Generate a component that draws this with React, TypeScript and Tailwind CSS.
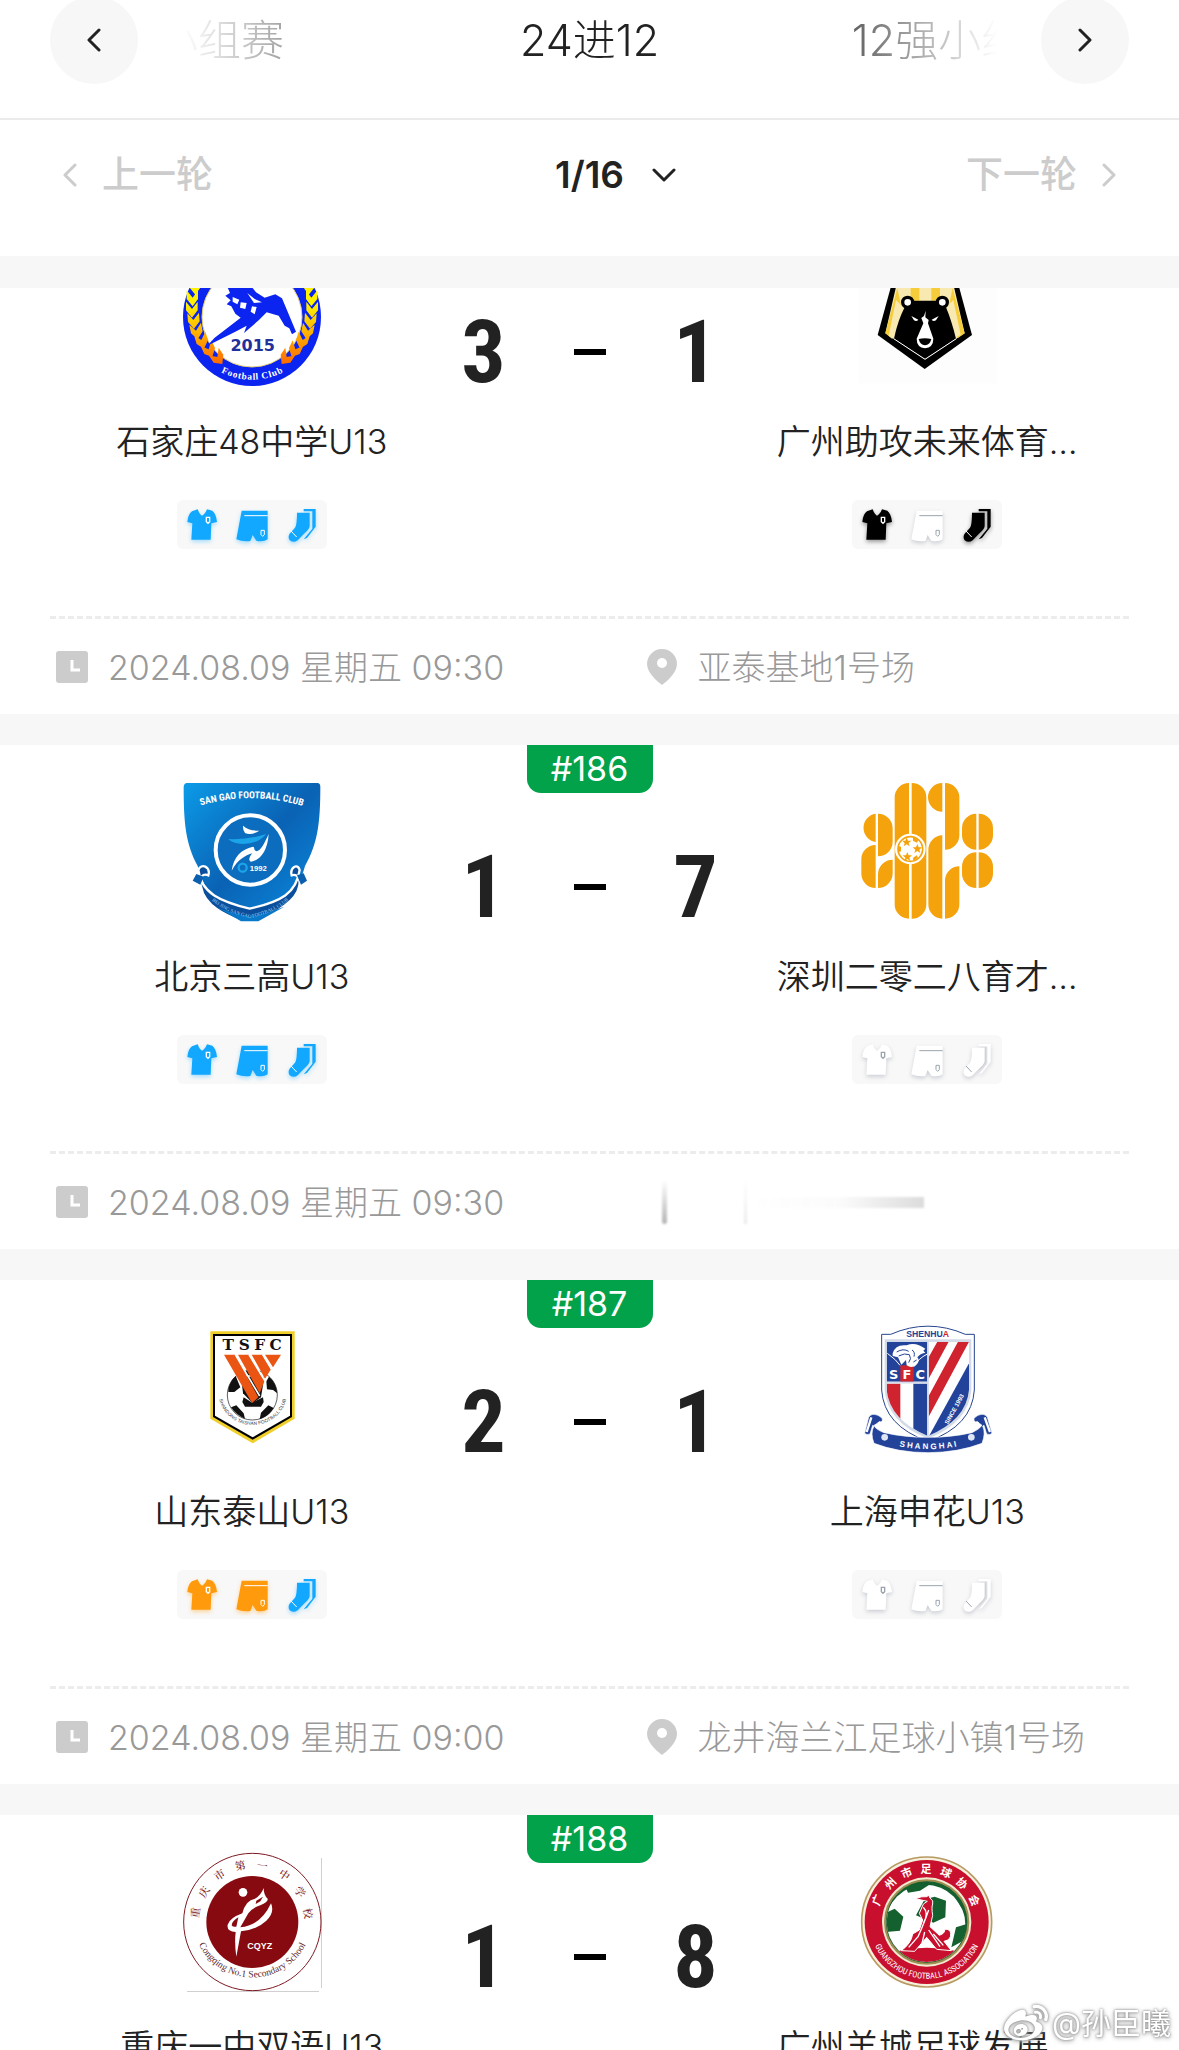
import type { ReactNode } from 'react';
import clsx from 'clsx';
import { FaWeibo } from 'react-icons/fa';

type KitColor = 'blue' | 'black' | 'white' | 'orange';

type Team = {
  name: string;
  crest: ReactNode;
  kit?: [KitColor, KitColor, KitColor];
};

type Match = {
  no?: string;
  home: Team;
  away: Team;
  score: [number, number];
  time?: string;
  place?: ReactNode;
};

const kitStyles: Record<KitColor, string> = {
  blue: 'text-[#12a8ff] drop-shadow-[0_2px_2px_rgba(18,168,255,0.35)]',
  black: 'text-black drop-shadow-[0_2px_2px_rgba(0,0,0,0.4)]',
  white: 'text-white drop-shadow-[0_2px_2px_rgba(100,110,130,0.3)]',
  orange: 'text-[#ff9a0c] drop-shadow-[0_2px_2px_rgba(255,154,12,0.4)]',
};

const lineColor = (c: KitColor) => (c === 'white' ? '#9aa3ad' : '#fff');

const Chevron = ({ d, className }: { d: string; className: string }) => (
  <svg viewBox="0 0 24 24" className={className} fill="none" stroke="currentColor">
    <path d={d} strokeLinecap="round" strokeLinejoin="round" />
  </svg>
);

const LEFT = 'M17 2L7 12l10 10';
const RIGHT = 'M7 2l10 10L7 22';
const DOWN = 'M2 7l10 10L22 7';

const Shirt = ({ color }: { color: KitColor }) => (
  <svg viewBox="340 690 150 147" className={clsx('w-[50px] h-[49px]', kitStyles[color])}>
    <path
      fill="currentColor"
      d="M385 724L402 718Q408 734 415 737Q424 733 430 718L446 722Q458 732 460 756L443 760L441 809H383L386 760L371 756Q373 732 385 724Z"
    />
    <path fill="none" stroke={lineColor(color)} strokeWidth="4" d="M428 742h10v13l-5 5l-5-5z" />
  </svg>
);

const Shorts = ({ color }: { color: KitColor }) => (
  <svg viewBox="490 690 150 147" className={clsx('w-[50px] h-[49px]', kitStyles[color])}>
    <path
      fill="currentColor"
      d="M534 722H612V808Q598 817 578 812L567 795L560 813Q538 816 518 808Z"
    />
    <path
      fill="none"
      stroke={lineColor(color)}
      strokeWidth="3"
      d="M542 737H612M592 781h10v13l-5 5l-5-5z"
    />
  </svg>
);

const Socks = ({ color }: { color: KitColor }) => (
  <svg viewBox="640 690 150 147" className={clsx('w-[50px] h-[49px]', kitStyles[color])}>
    <path fill="currentColor" d="M720 717H756V770L730 804L720 808L746 776V724H720Z" />
    <path
      fill="currentColor"
      d="M700 728H738V768Q737 778 724 788L702 811Q690 820 678 811Q671 800 679 790L694 773Q700 764 700 728Z"
    />
    <path fill="none" stroke={lineColor(color)} strokeWidth="3" d="M682 783L699 801" />
    {color === 'white' && (
      <path fill="none" stroke="#c3c8ce" strokeWidth="2" d="M740 726V770Q738 780 722 794" />
    )}
  </svg>
);

const LionCrest = () => (
  <svg viewBox="0 0 420 420" className="size-35">
    <defs>
      <path id="lion-arc" d="M95 322A172 172 0 0 0 325 322" />
      <linearGradient id="leaf" x1="0" y1="0" x2="0" y2="1">
        <stop offset="0.3" stopColor="#fff200" />
        <stop offset="1" stopColor="#ff6a00" />
      </linearGradient>
    </defs>
    <circle cx="210" cy="210" r="207" fill="#0b24f0" />
    <circle cx="210" cy="210" r="150" fill="#fff" stroke="#e3cf7a" strokeWidth="3" />
    <path
      fill="url(#leaf)"
      d="M22 95l18 22l16-22v26l-16 22l-18-22zM14 130l18 22l16-22v26l-16 22l-18-22zM12 164l18 22l17-22v26l-17 22l-18-22zM16 199l18 20l17-22l2 26l-17 22l-18-20zM22 233l20 18l15-24l5 26l-15 24l-20-18zM36 265l22 14l12-25l8 25l-12 26l-22-14zM56 297l24 10l8-27l11 23l-8 27l-24-9zM80 325l26 5l4-28l14 21l-3 28l-26-4z"
    />
    <path
      fill="url(#leaf)"
      transform="matrix(-1 0 0 1 420 0)"
      d="M22 95l18 22l16-22v26l-16 22l-18-22zM14 130l18 22l16-22v26l-16 22l-18-22zM12 164l18 22l17-22v26l-17 22l-18-22zM16 199l18 20l17-22l2 26l-17 22l-18-20zM22 233l20 18l15-24l5 26l-15 24l-20-18zM36 265l22 14l12-25l8 25l-12 26l-22-14zM56 297l24 10l8-27l11 23l-8 27l-24-9zM80 325l26 5l4-28l14 21l-3 28l-26-4z"
    />
    <path
      fill="#0b24f0"
      d="M132 110L200 108L222 136L248 152L280 142L300 154L342 254L330 262L322 244L308 236L290 206L254 196L230 220L186 258L194 236L160 254L76 296L98 272L140 240L176 212L160 200L148 178L134 172L146 160L130 146L144 138Z"
    />
    <path
      fill="#fff"
      d="M152 150l20 8l-6 14l-14-8zM176 166l18 2l-4 18l-16-4zM196 138l22 18l22 10l-24 2zM210 178l14 2l-6 22l-12-8z"
    />
    <text
      x="212"
      y="312"
      textAnchor="middle"
      className="font-['DejaVu_Sans'] font-bold text-[48px]"
      fill="#22309c"
    >
      2015
    </text>
    <text className="font-['Liberation_Serif'] font-bold text-[28px]" fill="#fff" dy="32">
      <textPath href="#lion-arc" startOffset="50%" textAnchor="middle">
        Football Club
      </textPath>
    </text>
  </svg>
);

const BearCrest = () => (
  <svg viewBox="357 -69 420 420" className="size-35">
    <rect x="362" y="-64" width="415" height="404" fill="#fdfdfd" />
    <path d="M478 -20H644L702 195L560 297L419 195Z" fill="#000" />
    <path d="M488 -10H634L680 190L561 268L442 190Z" fill="#f8e9b0" />
    <path
      d="M518 -10h26V92h-26zM580 -10h26V92h-26zM478 54L490 110L462 206L442 190ZM644 54L632 110L660 204L680 190Z"
      fill="#f5cd3b"
    />
    <path d="M474 90l20 20l-30 96l-12-9zM646 90l-20 20l28 92l14-8z" fill="#f8e9b0" />
    <path
      d="M526 92H594L624 112Q640 150 654 206L561 267L468 206Q480 150 500 112Z"
      fill="#000"
    />
    <path d="M467 206L561 268L655 206" fill="none" stroke="#fff" strokeWidth="3" />
    <g fill="#fff" stroke="#000" strokeWidth="10">
      <circle cx="509" cy="97" r="15" />
      <circle cx="613" cy="97" r="15" />
    </g>
    <path
      fill="#fff"
      d="M563 122L558 138L550 144L556 160L536 206Q536 232 561 235Q586 232 586 206L570 160L572 150L562 142ZM520 138L541 149Q536 156 528 151ZM602 138L581 149Q586 156 594 151Z"
    />
    <path d="M542 207Q561 202 580 207Q576 224 561 226Q546 224 542 207Z" fill="#000" />
  </svg>
);

const SanGaoCrest = () => (
  <svg viewBox="93 66 420 420" className="size-35">
    <defs>
      <linearGradient id="sg" x1="0" y1="0" x2="1" y2="0.9">
        <stop offset="0" stopColor="#0b9be8" />
        <stop offset="0.55" stopColor="#0a62b4" />
        <stop offset="1" stopColor="#0a86da" />
      </linearGradient>
      <path id="sg-top" d="M120 146Q302 82 484 148" />
      <path id="sg-bottom" d="M152 384Q190 450 296 474Q410 450 440 380" />
    </defs>
    <path
      fill="url(#sg)"
      d="M108 69H499Q508 70 508 80C508 190 500 250 462 318C440 400 400 440 296 450C200 440 160 400 140 318C104 250 98 190 98 80Q99 70 108 69Z"
    />
    <path
      fill="#0b4f9c"
      stroke="#fff"
      strokeWidth="7"
      d="M150 380C140 350 158 340 172 346C180 320 150 308 142 330C150 400 210 425 296 446C390 425 436 400 446 330C440 308 416 322 422 346C440 340 450 360 444 380C436 430 350 468 322 484H270C230 468 160 440 150 380Z"
    />
    <path
      fill="#0a78c8"
      d="M196 440Q240 460 296 470Q350 460 400 440L322 484H270Z"
    />
    <path fill="#0a5fae" d="M125 362L136 342L158 350L148 374ZM468 362L458 340L438 346L450 374Z" />
    <circle cx="298" cy="270" r="104" fill="#0c6cbd" stroke="#fff" strokeWidth="12" />
    <path
      fill="#fff"
      d="M276 197Q294 213 325 212Q300 228 282 219Q275 210 276 197ZM353 222C350 270 330 300 300 305C288 300 300 285 304 280C285 286 262 296 242 332C248 290 270 268 306 260C312 262 308 272 316 274C330 272 340 250 353 222Z"
    />
    <path fill="#1ba4ea" d="M232 237Q290 240 346 222Q320 252 276 252Q244 250 232 237Z" />
    <circle cx="275" cy="323" r="12" fill="none" stroke="#1ba4ea" strokeWidth="7" />
    <text x="296" y="332" className="font-['Liberation_Sans'] font-bold text-[23px]" fill="#fff">
      1992
    </text>
    <text className="font-['Roboto_Condensed','Liberation_Sans'] font-bold text-[29px]" fill="#fff">
      <textPath href="#sg-top" startOffset="50%" textAnchor="middle">
        SAN GAO FOOTBALL CLUB
      </textPath>
    </text>
    <text className="font-['Liberation_Serif'] text-[15px]" fill="#9fd0f5">
      <textPath href="#sg-bottom" startOffset="50%" textAnchor="middle">
        BEI JING SAN GAO FOOTBALL CLUB
      </textPath>
    </text>
  </svg>
);

const star = 'M0-14L4-4L14-4L6 3L9 13L0 7L-9 13L-6 3L-14-4L-4-4Z';

const Crest2028 = () => (
  <svg viewBox="87 66 420 420" className="size-35">
    <g fill="#f5a30c">
      <path d="M143 161V246A43 43 0 0 1 143 161ZM150 161A44 44 0 0 1 194 205V245A44 44 0 0 1 150 289Z" />
      <path d="M143 255V384A43 43 0 0 1 100 340V299A43 43 0 0 1 143 255ZM194 299V340A44 44 0 0 1 150 384V343A44 44 0 0 1 194 299Z" />
      <path d="M243 69V476A43 43 0 0 1 200 432V112A43 43 0 0 1 243 69ZM251 69A43 43 0 0 1 295 112V432A43 43 0 0 1 251 476Z" />
      <path d="M343 69V155A43 43 0 0 1 343 69ZM351 69A43 43 0 0 1 394 112V226A43 43 0 0 1 351 269Z" />
      <path d="M343 226V476A43 43 0 0 1 301 432V269A43 43 0 0 1 343 226ZM394 319V432A43 43 0 0 1 351 476V362A43 43 0 0 1 394 319Z" />
      <path d="M445 161V269A43 43 0 0 1 402 226V205A43 43 0 0 1 445 161ZM452 161A43 43 0 0 1 495 205V226A43 43 0 0 1 452 269Z" />
      <path d="M445 277V384A43 43 0 0 1 402 340V320A43 43 0 0 1 445 277ZM452 277A43 43 0 0 1 495 320V340A43 43 0 0 1 452 384Z" />
    </g>
    <circle cx="247" cy="267" r="46" fill="#fff" />
    <circle cx="247" cy="267" r="37" fill="#fff" stroke="#f5a30c" strokeWidth="5" />
    <g fill="#f5a30c">
      <path d={star} transform="translate(236 246)" />
      <path d={star} transform="translate(268 266)" />
      <path d={star} transform="translate(238 290)" />
      <path d="M255 232l16 8l-4 8l-12-6zM211 258l8 2v14l-8 2zM256 302l14-9l-4-7l-11 8z" />
    </g>
  </svg>
);

const TaishanCrest = () => (
  <svg viewBox="3 21 420 420" className="size-35">
    <defs>
      <path id="ts-arc" d="M118 262A98 92 0 0 0 312 262" />
    </defs>
    <path d="M88 64H341V326L215 400L88 326Z" fill="#f0cf2a" />
    <path d="M96 72H333V321L215 389L96 321Z" fill="#000" />
    <path d="M102 78H327V317L215 382L102 317Z" fill="#fff" />
    <g
      textAnchor="middle"
      className="font-['DejaVu_Serif'] font-bold text-[46px]"
      fill="#111"
    >
      <text x="142" y="121">T</text>
      <text x="190" y="121">S</text>
      <text x="236" y="121">F</text>
      <text x="284" y="121">C</text>
    </g>
    <circle cx="214" cy="255" r="75" fill="#fff" stroke="#111" strokeWidth="2" />
    <path
      d="M188 262L214 278L246 262L248 276L240 290H192L184 276ZM142 236Q148 212 164 198L178 232L160 246L142 246ZM190 182H236L226 196H200ZM264 200Q286 218 289 250L276 240L258 238L256 214ZM150 292L166 286L188 310L192 326Q166 316 150 292ZM278 294L262 286L240 308L236 328Q264 318 278 294Z"
      fill="#111"
    />
    <path d="M180 200L250 200L240 262L215 280L186 250Z" fill="#111" />
    <g fill="#ea5514">
      <path d="M129 134H163L232 262L213 279Z" />
      <path d="M171 134H204L250 214L236 250Z" />
      <path d="M212 134H245L270 178L252 206Z" />
      <path d="M252 134H300L276 172Z" />
    </g>
    <path d="M163 134L236 258M204 134L254 216M245 134L274 182" stroke="#fff" strokeWidth="5" />
    <text className="font-['Liberation_Sans'] text-[14px]" fill="#333" dy="4">
      <textPath href="#ts-arc" startOffset="50%" textAnchor="middle">
        SHANDONG TAISHAN FOOTBALL CLUB
      </textPath>
    </text>
  </svg>
);

const ShenhuaCrest = () => (
  <svg viewBox="57 51 420 420" className="size-35">
    <defs>
      <clipPath id="sh-shield">
        <path d="M146 125H393V270Q385 360 270 408Q155 360 146 270Z" />
      </clipPath>
      <path id="sh-arc" d="M140 421Q270 462 400 421" />
    </defs>
    <path
      d="M131 103H158Q270 54 382 103H409V270Q402 378 270 424Q138 378 131 270Z"
      fill="#fff"
      stroke="#27458f"
      strokeWidth="3"
    />
    <path d="M140 118H400V270Q392 368 270 416Q148 368 140 270Z" fill="#d3dbe8" />
    <g clipPath="url(#sh-shield)">
      <rect x="140" y="120" width="260" height="300" fill="#fff" />
      <rect x="146" y="125" width="122" height="120" fill="#23439b" />
      <rect x="187" y="196" width="40" height="49" fill="#cf2430" />
      <rect x="146" y="251" width="41" height="160" fill="#cf2430" />
      <rect x="226" y="251" width="42" height="160" fill="#23439b" />
      <path d="M298 125H332L272 236V172ZM360 125H393L272 350V288Z" fill="#cf2430" />
      <path d="M395 186V410H272Z" fill="#23439b" />
      <path d="M270 125V410M146 248H270" stroke="#d3dbe8" strokeWidth="5" />
    </g>
    <path
      fill="#fff"
      d="M164 160Q172 132 206 136Q232 124 262 146L256 152L262 158Q244 162 238 172Q248 182 234 196Q220 206 206 196L204 180L190 194L180 172L164 168Z"
    />
    <path
      fill="none"
      stroke="#23439b"
      strokeWidth="3"
      d="M176 156Q196 144 212 154M182 168Q200 158 214 164Q222 176 212 188M222 150Q232 156 228 170M226 186L236 180"
    />
    <path fill="none" stroke="#fff" strokeWidth="3" d="M148 160Q176 180 186 196M268 162Q240 176 228 200" />
    <g
      textAnchor="middle"
      className="font-['DejaVu_Sans'] font-bold text-[39px]"
      fill="#fff"
    >
      <text x="167" y="238">S</text>
      <text x="207" y="238">F</text>
      <text x="247" y="238">C</text>
    </g>
    <text
      x="269"
      y="112"
      textAnchor="middle"
      className="font-['Liberation_Sans'] font-bold text-[26px]"
      fill="#23439b"
    >
      SHENHU<tspan fill="#cf2430">A</tspan>
    </text>
    <text
      transform="translate(330 374) rotate(-61)"
      className="font-['Liberation_Sans'] font-bold text-[18px]"
      fill="#fff"
    >
      SINCE 1993
    </text>
    <path
      d="M120 346Q100 338 92 352L80 400Q86 406 96 402L104 376L108 378Q96 400 108 430Q180 458 270 458Q360 458 432 430Q444 400 434 378L438 376L446 402Q456 406 462 400L448 352Q440 338 420 346Q400 356 412 366Q420 362 424 370L432 376Q424 388 402 398Q340 412 270 412Q200 412 138 398Q112 388 108 376L118 370Q122 362 130 366Q140 356 120 346Z"
      fill="#23439b"
      stroke="#fff"
      strokeWidth="2"
    />
    <path d="M100 352L86 396M440 352L456 396" stroke="#fff" strokeWidth="7" />
    <circle cx="140" cy="412" r="10" fill="#dfe6f3" />
    <circle cx="400" cy="412" r="10" fill="#dfe6f3" />
    <text className="font-['Liberation_Sans'] font-bold text-[24px]" fill="#fff" dy="6">
      <textPath href="#sh-arc" startOffset="50%" textAnchor="middle">
        S H A N G H A I
      </textPath>
    </text>
  </svg>
);

const CqyzCrest = () => (
  <svg viewBox="63 66 420 420" className="size-35">
    <defs>
      <path id="cq-arc" d="M98 300A180 180 0 0 0 450 300" />
    </defs>
    <path d="M482 84V474M78 485H474" stroke="#aaa" strokeWidth="2" />
    <circle cx="274" cy="276" r="206" fill="#fff" stroke="#7d1a22" strokeWidth="3" />
    <circle cx="274" cy="276" r="138" fill="#870a10" />
    <circle cx="246" cy="187" r="13" fill="#fff" />
    <path
      fill="#fff"
      d="M308 174Q308 196 320 206Q322 216 298 226Q276 232 262 250L238 292Q300 286 330 220Q342 248 316 272Q286 300 240 304L226 380Q220 340 224 306Q196 304 200 284Q206 264 244 250Q254 210 282 206Q300 196 308 174ZM232 262Q212 274 212 286Q216 292 226 290Z"
    />
    <path d="M286 212L306 200L298 214L284 222Z" fill="#870a10" />
    <text x="259" y="356" className="font-['Liberation_Sans'] font-bold text-[27px]" fill="#fff">
      CQYZ
    </text>
    <g
      textAnchor="middle"
      className="font-['Noto_Serif_CJK_SC','Noto_Sans_CJK_SC'] font-medium text-[32px]"
      fill="#7d1a22"
    >
      <text transform="translate(104 248) rotate(-80)" y="11">重</text>
      <text transform="translate(130 186) rotate(-57)" y="11">庆</text>
      <text transform="translate(176 135) rotate(-34)" y="11">市</text>
      <text transform="translate(238 108) rotate(-11)" y="11">第</text>
      <text transform="translate(304 108) rotate(10)" y="11">一</text>
      <text transform="translate(370 135) rotate(34)" y="11">中</text>
      <text transform="translate(416 186) rotate(57)" y="11">学</text>
      <text transform="translate(440 250) rotate(80)" y="11">校</text>
    </g>
    <text className="font-['Liberation_Serif'] text-[29px]" fill="#5c2a30">
      <textPath href="#cq-arc" startOffset="50%" textAnchor="middle">
        Congqing No.1 Secondary School
      </textPath>
    </text>
  </svg>
);

const GuangzhouCrest = () => (
  <svg viewBox="357 66 420 420" className="size-35">
    <defs>
      <path id="gz-arc" d="M399 312A171 171 0 0 0 733 312" />
      <clipPath id="gz-ball">
        <circle cx="566" cy="276" r="120" />
      </clipPath>
    </defs>
    <circle cx="566" cy="276" r="195" fill="#f7f0dc" stroke="#b79a62" strokeWidth="5" />
    <circle cx="566" cy="276" r="186" fill="#c8102e" />
    <circle cx="566" cy="276" r="134" fill="#f3ead2" />
    <circle cx="566" cy="276" r="125" fill="#14602f" stroke="#a08d52" strokeWidth="6" />
    <g clipPath="url(#gz-ball)">
      <circle cx="562" cy="284" r="120" fill="#fff" />
      <path
        fill="#14602f"
        d="M560 208L590 200L624 212L622 262L586 278L534 256ZM440 250L470 236L496 260L486 302L444 306ZM500 166L540 150L574 164L546 182L510 188ZM626 160L690 220L680 250L650 200ZM654 292L686 282L680 330L640 352Z"
      />
      <path fill="#c8102e" d="M484 362Q566 344 650 362L620 400H510Z" />
    </g>
    <path
      fill="#c8102e"
      stroke="#fff"
      strokeWidth="3"
      d="M532 206Q552 198 566 200L572 196L576 204Q588 212 584 222Q580 232 584 256L576 290L604 316Q622 310 620 298Q636 296 638 310Q640 330 618 334L640 362L596 358L566 322L530 364L490 362Q520 340 524 312L544 300L554 270L544 250L556 222L568 214Z"
    />
    <path
      fill="none"
      stroke="#fff"
      strokeWidth="4"
      d="M556 232Q574 250 556 280M572 240Q560 276 540 320L512 352M560 306L552 340M572 300L606 350M586 312L616 346"
    />
    <g
      textAnchor="middle"
      className="font-['Noto_Sans_CJK_SC'] font-bold text-[33px]"
      fill="#fff"
    >
      <text transform="translate(418 210) rotate(-68)" y="12">广</text>
      <text transform="translate(457 160) rotate(-45)" y="12">州</text>
      <text transform="translate(506 128) rotate(-22)" y="12">市</text>
      <text transform="translate(564 117)" y="12">足</text>
      <text transform="translate(624 128) rotate(22)" y="12">球</text>
      <text transform="translate(672 160) rotate(45)" y="12">协</text>
      <text transform="translate(709 211) rotate(68)" y="12">会</text>
    </g>
    <text className="font-['Roboto_Condensed','Liberation_Sans'] text-[25px]" fill="#fff">
      <textPath href="#gz-arc" startOffset="50%" textAnchor="middle">
        GUANGZHOU FOOTBALL ASSOCIATION
      </textPath>
    </text>
  </svg>
);

// leftover streaks where the venue line has been wiped out
const Smudge = () => (
  <div className="flex h-11 items-center blur-[1px]">
    <div className="ml-4 h-11 w-[5px] rounded-b bg-linear-to-b from-transparent to-[#b5b5b5]" />
    <div className="ml-[77px] h-11 w-[3px] bg-linear-to-b from-transparent to-[#ececec]" />
    <div className="ml-3 h-[11px] w-[165px] bg-linear-to-r from-transparent via-[#fbfbfb] to-[#dcdcdc]" />
  </div>
);

const matches: Match[] = [
  {
    home: { name: '石家庄48中学U13', crest: <LionCrest />, kit: ['blue', 'blue', 'blue'] },
    away: { name: '广州助攻未来体育…', crest: <BearCrest />, kit: ['black', 'white', 'black'] },
    score: [3, 1],
    time: '2024.08.09 星期五 09:30',
    place: '亚泰基地1号场',
  },
  {
    no: '#186',
    home: { name: '北京三高U13', crest: <SanGaoCrest />, kit: ['blue', 'blue', 'blue'] },
    away: { name: '深圳二零二八育才…', crest: <Crest2028 />, kit: ['white', 'white', 'white'] },
    score: [1, 7],
    time: '2024.08.09 星期五 09:30',
  },
  {
    no: '#187',
    home: { name: '山东泰山U13', crest: <TaishanCrest />, kit: ['orange', 'orange', 'blue'] },
    away: { name: '上海申花U13', crest: <ShenhuaCrest />, kit: ['white', 'white', 'white'] },
    score: [2, 1],
    time: '2024.08.09 星期五 09:00',
    place: '龙井海兰江足球小镇1号场',
  },
  {
    no: '#188',
    home: { name: '重庆一中双语U13', crest: <CqyzCrest /> },
    away: { name: '广州羊城足球发展…', crest: <GuangzhouCrest /> },
    score: [1, 8],
  },
];

const TeamColumn = ({ team }: { team: Team }) => (
  <div className="flex flex-1 flex-col items-center">
    {team.crest}
    <div className="mt-[33px] text-[34px] leading-11 font-[350] whitespace-nowrap">{team.name}</div>
    {team.kit && (
      <div className="mt-9 flex rounded-md bg-[#f8f8f8]">
        <Shirt color={team.kit[0]} />
        <Shorts color={team.kit[1]} />
        <Socks color={team.kit[2]} />
      </div>
    )}
  </div>
);

const Score = ({ value }: { value: number }) => (
  <span className="w-15 text-center font-['Liberation_Sans_Narrow','Roboto_Condensed','Roboto',sans-serif] font-bold text-[88px] leading-none">
    {value}
  </span>
);

const MatchCard = ({ match }: { match: Match }) => (
  <article className="relative h-[504px] shrink-0 bg-white pt-[37px]">
    {match.no && (
      <div className="absolute inset-x-0 top-0 flex justify-center">
        <span className="h-12 w-[126px] rounded-b-[14px] bg-[#02a24a] text-center text-[34px] leading-12 text-white">
          {match.no}
        </span>
      </div>
    )}
    <div className="flex h-[369px] items-start px-[50px]">
      <TeamColumn team={match.home} />
      <div className="mt-[61px] flex w-[272px] items-center justify-between">
        <Score value={match.score[0]} />
        <span className="h-[6px] w-8 bg-black" />
        <Score value={match.score[1]} />
      </div>
      <TeamColumn team={match.away} />
    </div>
    {match.time && (
      <>
        <div className="mx-[50px] border-t-3 border-dashed border-[#ececec]" />
        <div className="grid h-24 grid-cols-2 items-center text-[34px] font-light text-[#999]">
          <div className="flex items-center gap-5 pl-14 whitespace-nowrap">
            <svg viewBox="0 0 32 32" className="size-8">
              <rect width="32" height="32" rx="3" fill="#ccc" />
              <path d="M16 9v10h8" fill="none" stroke="#fff" strokeWidth="3" />
            </svg>
            <time>{match.time}</time>
          </div>
          <div className="flex items-center gap-5 pl-14 whitespace-nowrap">
            {match.place ? (
              <>
                <svg viewBox="0 0 32 38" className="h-[38px] w-8">
                  <path
                    d="M16 1A15 15 0 0 1 31 16C31 25 20 34 16 37C12 34 1 25 1 16A15 15 0 0 1 16 1Z"
                    fill="#ccc"
                  />
                  <circle cx="16" cy="15" r="5" fill="#fff" />
                </svg>
                <span>{match.place}</span>
              </>
            ) : (
              <Smudge />
            )}
          </div>
        </div>
      </>
    )}
  </article>
);

const StageTabs = () => (
  <div className="flex h-30 items-start justify-between border-b-2 border-[#ebebeb] px-[50px]">
    <button
      aria-label="上一阶段"
      className="-mt-1 flex size-22 shrink-0 items-center justify-center rounded-full bg-[#f7f7f7]"
    >
      <Chevron d={LEFT} className="size-6 stroke-3" />
    </button>
    <div className="mx-11 flex h-20 min-w-0 flex-1 items-center justify-center overflow-hidden text-[43px] font-light whitespace-nowrap [mask-image:linear-gradient(to_right,transparent,black_30%,black_75%,transparent)]">
      <button className="w-[370px] shrink-0">小组赛</button>
      <button className="w-[370px] shrink-0">24进12</button>
      <button className="w-[370px] shrink-0">12强小组赛</button>
    </div>
    <button
      aria-label="下一阶段"
      className="-mt-1 flex size-22 shrink-0 items-center justify-center rounded-full bg-[#f7f7f7]"
    >
      <Chevron d={RIGHT} className="size-6 stroke-3" />
    </button>
  </div>
);

const RoundBar = () => (
  <div className="flex h-[136px] items-center justify-between px-[58px] pb-[26px] text-[37px] font-medium">
    <button className="flex items-center gap-5 text-[#ccc]">
      <Chevron d={LEFT} className="size-6 stroke-3" />
      上一轮
    </button>
    <div className="relative">
      <select
        aria-label="轮次"
        defaultValue="1/16"
        className="block appearance-none bg-transparent text-center font-semibold"
      >
        <option>1/16</option>
      </select>
      <Chevron
        d={DOWN}
        className="pointer-events-none absolute top-1/2 left-full ml-7 size-6 -translate-y-1/2 stroke-3"
      />
    </div>
    <button className="flex items-center gap-5 text-[#ccc]">
      下一轮
      <Chevron d={RIGHT} className="size-6 stroke-3" />
    </button>
  </div>
);

export default function App() {
  return (
    <div className="relative flex h-screen flex-col overflow-hidden bg-[#f7f7f7] font-['Inter','Noto_Sans_CJK_SC',sans-serif] text-[#222]">
      <header className="relative z-10 shrink-0 border-b-32 border-[#f7f7f7] bg-white">
        <StageTabs />
        <RoundBar />
      </header>
      {/* the list is scrolled a little, so the first card starts under the header */}
      <main className="-mt-[78px] flex flex-col gap-[31px]">
        {matches.map((m, i) => (
          <MatchCard key={i} match={m} />
        ))}
      </main>
      <div className="absolute right-2 bottom-1 z-20 flex items-center gap-1 text-[30px] text-white [filter:drop-shadow(0_0_1px_#888)_drop-shadow(0_1px_2px_#aaa)]">
        <FaWeibo className="size-11" />
        @孙臣曦
      </div>
    </div>
  );
}
